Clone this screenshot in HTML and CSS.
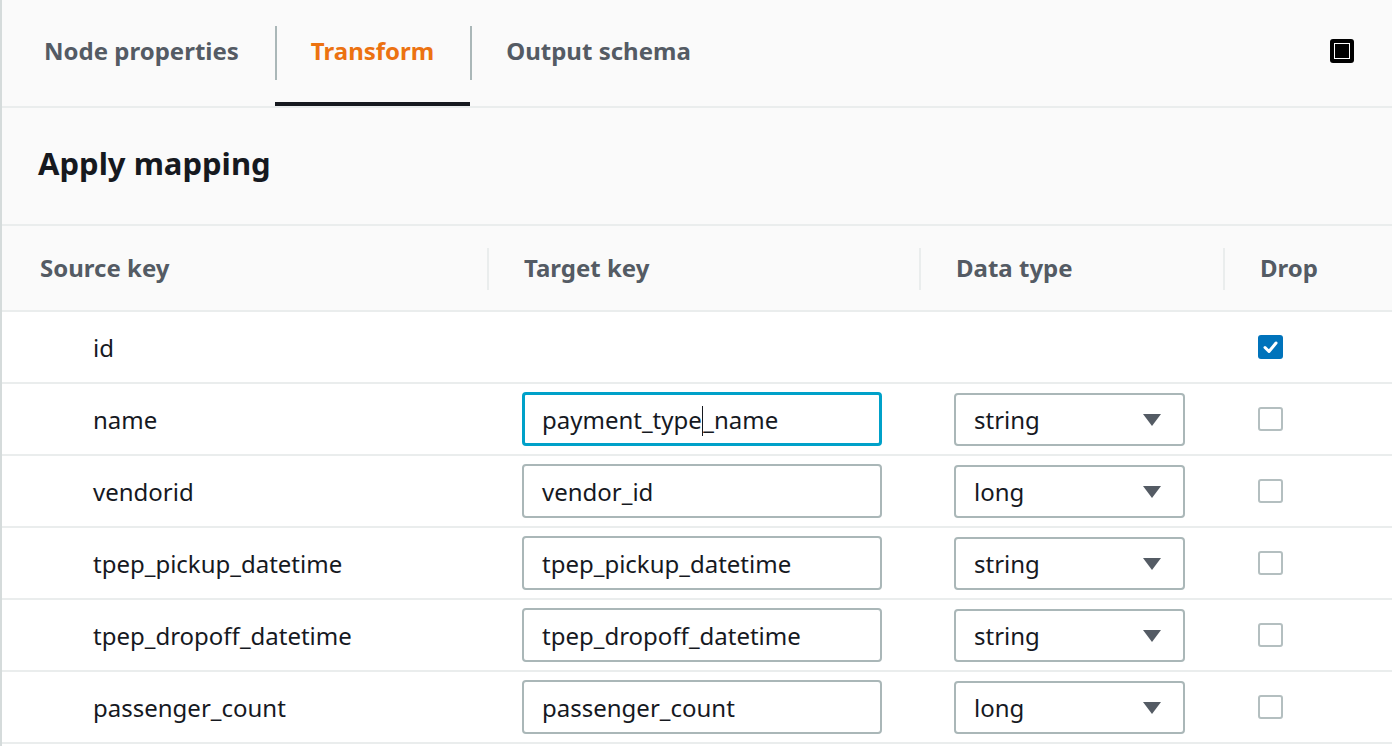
FILE: index.html
```html
<!DOCTYPE html>
<html lang="en">
<head>
<meta charset="utf-8">
<title>Apply mapping</title>
<link rel="stylesheet" href="styles.css">
</head>
<body>
<div class="panel">
  <div class="tabs">
    <div class="tab">Node properties</div>
    <div class="tab sep active">Transform</div>
    <div class="tab sep">Output schema</div>
    <div class="tab-spacer"></div>
    <div class="tab-icon">
      <svg width="24" height="24" viewBox="0 0 24 24"><rect x="0" y="0" width="24" height="24" rx="3" fill="#000"/><rect x="4" y="4" width="16" height="16" fill="#fff"/><rect x="5" y="5" width="14" height="14" fill="#000"/></svg>
    </div>
  </div>
  <div class="title-bar"><h2 class="title">Apply mapping</h2></div>
  <div class="table">
    <div class="thead">
      <div class="th">Source key</div>
      <div class="th sep">Target key</div>
      <div class="th sep">Data type</div>
      <div class="th sep">Drop</div>
    </div>
    <div class="row">
      <div class="td src">id</div>
      <div class="td"></div>
      <div class="td"></div>
      <div class="td"><span class="cb checked"><svg width="25" height="24" viewBox="0 0 25 24"><path d="M7 12.5 L11 16.5 L18 8" fill="none" stroke="#fff" stroke-width="3" stroke-linecap="round" stroke-linejoin="round"/></svg></span></div>
    </div>
    <div class="row">
      <div class="td src">name</div>
      <div class="td"><div class="input focus">payment_type<span class="caret"></span>_name</div></div>
      <div class="td"><div class="select">string<span class="arrow"></span></div></div>
      <div class="td"><span class="cb"></span></div>
    </div>
    <div class="row">
      <div class="td src">vendorid</div>
      <div class="td"><div class="input">vendor_id</div></div>
      <div class="td"><div class="select">long<span class="arrow"></span></div></div>
      <div class="td"><span class="cb"></span></div>
    </div>
    <div class="row">
      <div class="td src">tpep_pickup_datetime</div>
      <div class="td"><div class="input">tpep_pickup_datetime</div></div>
      <div class="td"><div class="select">string<span class="arrow"></span></div></div>
      <div class="td"><span class="cb"></span></div>
    </div>
    <div class="row">
      <div class="td src">tpep_dropoff_datetime</div>
      <div class="td"><div class="input">tpep_dropoff_datetime</div></div>
      <div class="td"><div class="select">string<span class="arrow"></span></div></div>
      <div class="td"><span class="cb"></span></div>
    </div>
    <div class="row">
      <div class="td src">passenger_count</div>
      <div class="td"><div class="input">passenger_count</div></div>
      <div class="td"><div class="select">long<span class="arrow"></span></div></div>
      <div class="td"><span class="cb"></span></div>
    </div>
  </div>
</div>
</body>
</html>
```
FILE: styles.css
```css
* { box-sizing: border-box; }
html, body { margin: 0; padding: 0; background: #fff; }
body {
  font-family: "Noto Sans", "Open Sans", sans-serif;
  color: #16191f;
  width: 1392px;
  height: 746px;
  overflow: hidden;
}
.panel {
  border-left: 2px solid #d5dbdb;
  height: 746px;
  overflow: hidden;
}
.tabs {
  display: flex;
  align-items: stretch;
  height: 108px;
  background: #fafafa;
  border-bottom: 2px solid #eaeded;
  padding-left: 6px;
}
.tab {
  position: relative;
  display: flex;
  align-items: center;
  padding: 0 36px 2px;
  font-size: 24px;
  font-weight: 700;
  color: #545b64;
  border-bottom: 4px solid transparent;
}
.tab.sep::before {
  content: "";
  position: absolute;
  left: 0;
  top: 26px;
  height: 54px;
  width: 2px;
  background: #aab7b8;
}
.tab.active {
  color: #ec7211;
  border-bottom-color: #16191f;
}
.tab-spacer { flex: 1; }
.tab-icon {
  display: flex;
  align-items: center;
  padding: 0 38px 4px 0;
}
.tab-icon svg { display: block; }
.title-bar {
  height: 118px;
  background: #fafafa;
  border-bottom: 2px solid #eaeded;
  display: flex;
  align-items: center;
  padding: 0 0 6px 36px;
}
.title {
  margin: 0;
  font-size: 31px;
  font-weight: 700;
  color: #16191f;
}
.thead, .row {
  display: grid;
  grid-template-columns: 485px 432px 304px 1fr;
}
.thead {
  height: 86px;
  background: #fafafa;
  border-bottom: 2px solid #eaeded;
}
.th {
  position: relative;
  display: flex;
  align-items: center;
  padding: 0 0 2px 37px;
  font-size: 24px;
  font-weight: 700;
  color: #545b64;
}
.th:first-child { padding-left: 38px; }
.th.sep::before {
  content: "";
  position: absolute;
  left: 0;
  top: 22px;
  height: 42px;
  width: 2px;
  background: #eaeded;
}
.row {
  height: 72px;
  border-bottom: 2px solid #eaeded;
}
.td {
  display: flex;
  align-items: center;
  padding-left: 35px;
  font-size: 24px;
}
.td.src { padding-left: 91px; }
.input {
  width: 360px;
  height: 54px;
  border: 2px solid #aab7b8;
  border-radius: 4px;
  display: flex;
  align-items: center;
  padding-left: 18px;
  font-size: 24px;
  color: #16191f;
  background: #fff;
}
.input.focus { border: 3px solid #00a1c9; padding-left: 17px; }
.caret {
  display: inline-block;
  width: 1.5px;
  height: 30px;
  background: #16191f;
  margin-bottom: -4px;
}
.select {
  position: relative;
  width: 231px;
  height: 53px;
  border: 2px solid #aab7b8;
  border-radius: 4px;
  display: flex;
  align-items: center;
  padding-left: 18px;
  font-size: 24px;
  background: #fff;
}
.arrow {
  position: absolute;
  right: 22px;
  top: 19px;
  width: 0;
  height: 0;
  border-left: 9px solid transparent;
  border-right: 9px solid transparent;
  border-top: 12px solid #545b64;
}
.cb {
  display: block;
  width: 25px;
  height: 24px;
  border: 2px solid #b4bfc0;
  border-radius: 3px;
  background: #fff;
}
.cb.checked {
  border: none;
  background: #0073bb;
}
.cb svg { display: block; }
```
